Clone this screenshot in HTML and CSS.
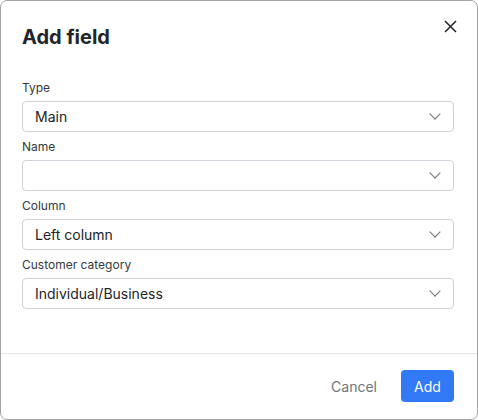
FILE: index.html
```html
<!DOCTYPE html>
<html lang="en">
<head>
    <meta charset="UTF-8" />
    <meta name="viewport" content="width=device-width, initial-scale=1.0" />
    <title>Add field</title>
    <link rel="stylesheet" href="styles.css">
</head>
<body>
    <div class="modal">
        <div class="modal__header">
            <h2 class="modal__title">Add field</h2>
            <button class="modal__close" aria-label="Close">
                <svg width="13" height="13" viewBox="0 0 13 13"><path d="M1 1L12 12M12 1L1 12" stroke="#1f2328" stroke-width="1.5" fill="none"/></svg>
            </button>
        </div>
        <div class="modal__body">
            <div class="form-group">
                <label class="form-label">Type</label>
                <div class="form-select"><span>Main</span><i class="chevron"></i></div>
            </div>
            <div class="form-group">
                <label class="form-label">Name</label>
                <div class="form-select"><span></span><i class="chevron"></i></div>
            </div>
            <div class="form-group">
                <label class="form-label">Column</label>
                <div class="form-select"><span>Left column</span><i class="chevron"></i></div>
            </div>
            <div class="form-group">
                <label class="form-label">Customer category</label>
                <div class="form-select"><span>Individual/Business</span><i class="chevron"></i></div>
            </div>
        </div>
        <div class="modal__footer">
            <button class="btn btn--link">Cancel</button>
            <button class="btn btn--primary">Add</button>
        </div>
    </div>
</body>
</html>
```

FILE: styles.css
```css
/* Page */
html, body {
  margin: 0;
  height: 100%;
}

body {
  font-family: Inter, "Noto Sans", sans-serif;
  color: #212529;
  background: #fff;
}

.modal {
  height: 100%;
  box-sizing: border-box;
  border: 1px solid #a3a3a3;
  border-radius: 7px;
  display: flex;
  flex-direction: column;
  background: #fff;
}

.modal__header {
  display: flex;
  justify-content: space-between;
  align-items: flex-start;
  padding: 23px 15px 0 21px;
}

.modal__title {
  margin: 0;
  font-size: 20px;
  font-weight: 700;
  line-height: 26px;
  color: #212529;
}

.modal__close {
  width: 24px;
  height: 24px;
  margin-top: -10px;
  padding: 0;
  border: 0;
  background: none;
  display: flex;
  align-items: center;
  justify-content: center;
  cursor: pointer;
}

.modal__body {
  flex: 1;
  padding: 29px 23px 0 21px;
  display: flex;
  flex-direction: column;
  gap: 6px;
}

.form-group {
  display: flex;
  flex-direction: column;
  gap: 4px;
}

.form-label {
  font-size: 12px;
  line-height: 18px;
  color: #343a40;
}

.form-select {
  height: 31px;
  box-sizing: border-box;
  border: 1px solid #ced4da;
  border-radius: 4px;
  padding: 0 14px 0 12px;
  display: flex;
  align-items: center;
  justify-content: space-between;
  font-size: 14px;
  color: #212529;
}

.chevron {
  width: 7px;
  height: 7px;
  border-right: 1.3px solid #6c757d;
  border-bottom: 1.3px solid #6c757d;
  transform: rotate(45deg);
  margin-top: -5px;
}

.modal__footer {
  border-top: 1px solid #e4e6e9;
  padding: 16px 23px 17px 0;
  display: flex;
  justify-content: flex-end;
  align-items: center;
  gap: 12px;
}

.btn {
  font-family: inherit;
  font-size: 14px;
  height: 32px;
  padding: 0 12px;
  border: 0;
  border-radius: 4px;
  cursor: pointer;
}

.btn--link {
  background: none;
  color: #6c757d;
}

.btn--primary {
  width: 53px;
  background: #3179f5;
  color: #fff;
}
```
